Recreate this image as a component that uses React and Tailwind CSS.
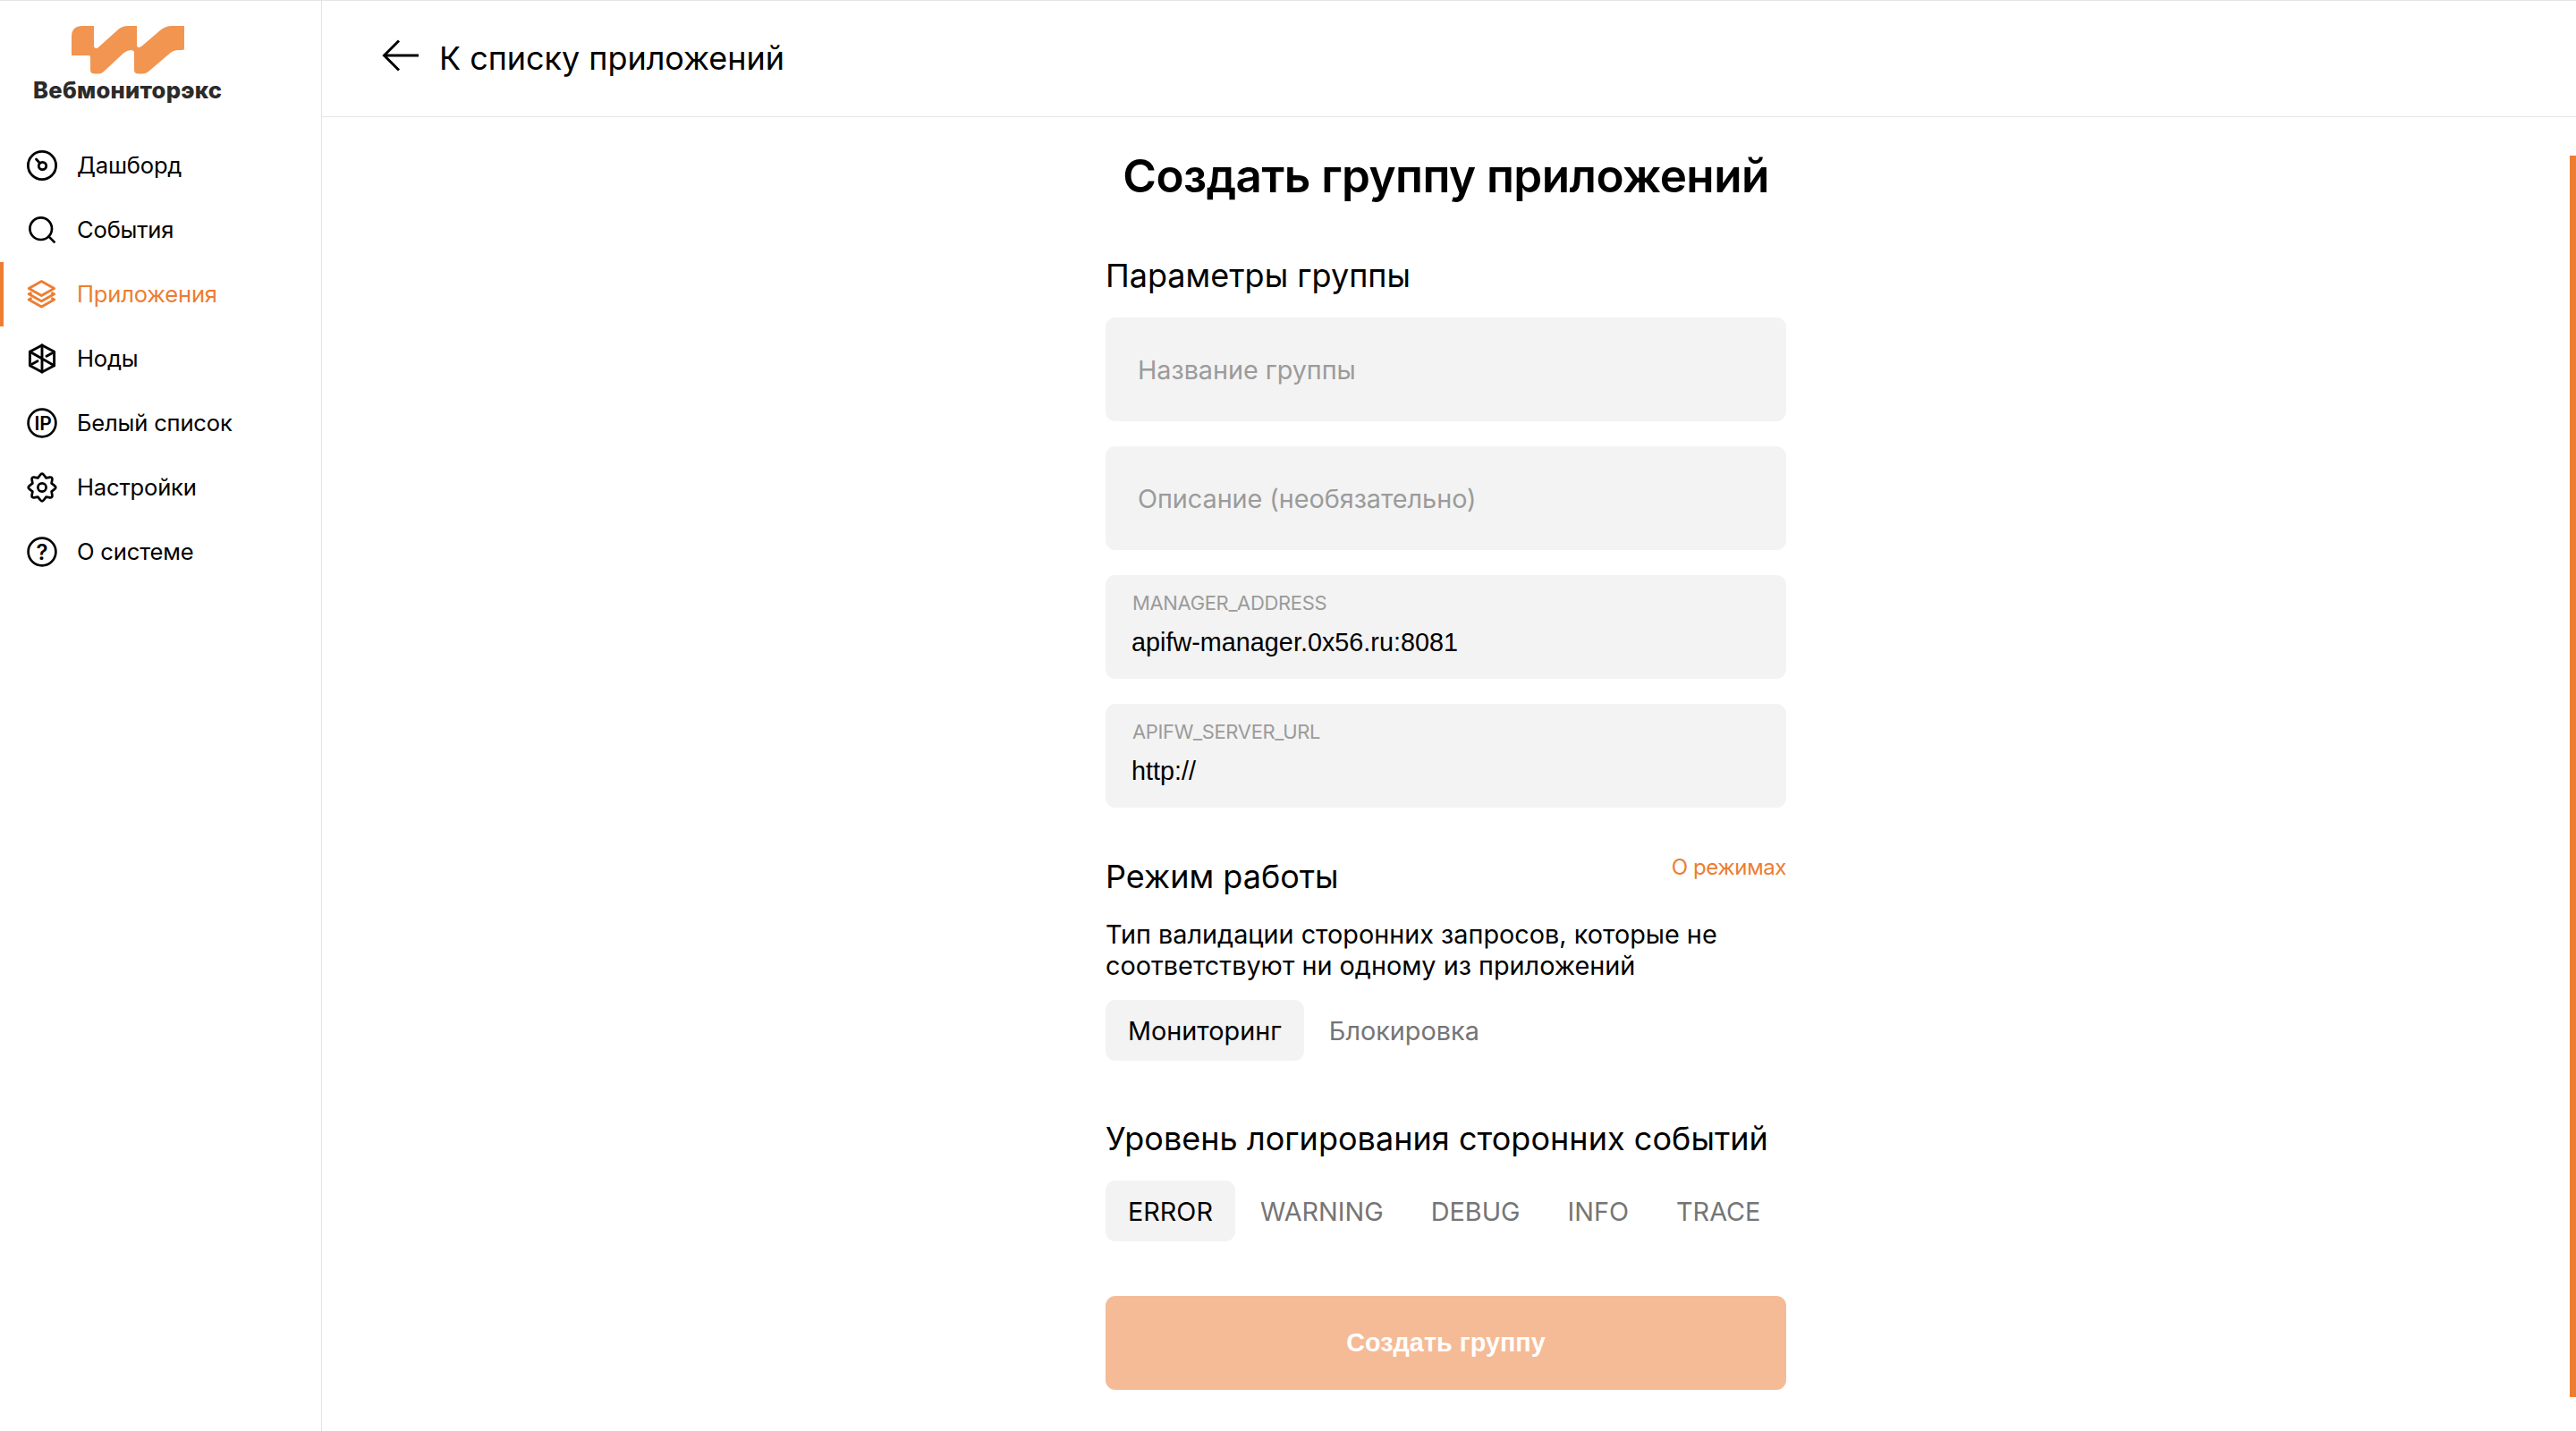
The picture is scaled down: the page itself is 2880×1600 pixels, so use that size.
import React, { useState } from 'react'

const DashboardIcon = () => (
  <svg width="36" height="36" viewBox="0 0 36 36" fill="none" stroke="currentColor" strokeWidth="2.8">
    <circle cx="18" cy="18" r="15.6" />
    <circle cx="18.5" cy="18.5" r="4.2" />
    <path d="M11.5 11l4 4.4" strokeLinecap="round" />
  </svg>
)

const SearchIcon = () => (
  <svg width="36" height="36" viewBox="0 0 36 36" fill="none" stroke="currentColor" strokeWidth="2.7">
    <circle cx="16.7" cy="16.7" r="12.3" />
    <path d="M25.4 25.4l7 7" />
  </svg>
)

const LayersIcon = () => (
  <svg width="36" height="36" viewBox="0 0 36 36" fill="none" stroke="currentColor" strokeWidth="2.9" strokeLinejoin="round">
    <path d="M17.4 3.6l14.2 8-14.2 8-14.2-8z" />
    <path d="M6.5 16.2l-3.3 1.6 14.2 8 14.2-8-3.3-1.6" />
    <path d="M6.5 22.4l-3.3 1.6 14.2 8 14.2-8-3.3-1.6" />
  </svg>
)

const NodesIcon = () => (
  <svg width="36" height="36" viewBox="0 0 36 36" fill="none" stroke="currentColor" strokeWidth="2.9" strokeLinejoin="round" strokeLinecap="round">
    <path d="M18 3l13.6 7.2v15.6L18 33 4.4 25.8V10.2z" />
    <path d="M18 3v30M4.4 10.2l27.2 15.6M23 15.3l6-3.3M13 20.8l-6 3.3" />
  </svg>
)

const IpIcon = () => (
  <svg width="36" height="36" viewBox="0 0 36 36" fill="none">
    <circle cx="18" cy="18" r="15.4" stroke="currentColor" strokeWidth="2.7" />
    <text x="19" y="25.6" textAnchor="middle" fill="currentColor" className="font-['Inter',sans-serif] text-[21px] font-semibold">IP</text>
  </svg>
)

const SettingsIcon = () => (
  <svg width="36" height="36" viewBox="0 0 36 36" fill="none" stroke="currentColor" strokeWidth="2.7" strokeLinejoin="round">
    <path d="M15.8 4.2Q18 1.2 20.2 4.2L22.6 7.4L27 6.6Q29.6 6.4 29.4 9L28.6 13.4L31.8 15.8Q34.8 18 31.8 20.2L28.6 22.6L29.4 27Q29.6 29.6 27 29.4L22.6 28.6L20.2 31.8Q18 34.8 15.8 31.8L13.4 28.6L9 29.4Q6.4 29.6 6.6 27L7.4 22.6L4.2 20.2Q1.2 18 4.2 15.8L7.4 13.4L6.6 9Q6.4 6.4 9 6.6L13.4 7.4Z" />
    <circle cx="18" cy="18" r="4.6" />
  </svg>
)

const HelpIcon = () => (
  <svg width="36" height="36" viewBox="0 0 36 36" fill="none">
    <circle cx="18" cy="18" r="15.4" stroke="currentColor" strokeWidth="2.7" />
    <text x="18" y="26.6" textAnchor="middle" fill="currentColor" className="font-['Inter',sans-serif] text-[24px] font-semibold">?</text>
  </svg>
)

const menu = [
  { label: 'Дашборд', icon: DashboardIcon },
  { label: 'События', icon: SearchIcon },
  { label: 'Приложения', icon: LayersIcon, active: true },
  { label: 'Ноды', icon: NodesIcon },
  { label: 'Белый список', icon: IpIcon },
  { label: 'Настройки', icon: SettingsIcon },
  { label: 'О системе', icon: HelpIcon },
]

const Logo = () => (
  <div className="h-[148px] pt-7 pl-[37px]">
    <svg className="ml-[43px]" width="126" height="54" viewBox="0 0 126 54" fill="#f29551">
      <path d="M0 33V12Q0 0 12 0H25V22Q25 25 28 25Q29 25 31 23L51 5Q56 0 63 0H73V21Q73 24 75 24Q76 24 78 23L99 5Q105 0 112 0H126V25Q126 27 124 27H119Q114 27 110 30.5L86 51Q83 53.5 79 53.5H75Q70 53.5 70 49V30Q70 27 66 27Q62 27 58 30.5L36 51Q33.5 53.5 30 53.5H26Q21 53.5 21 49V35Q21 33 19 33Z" />
    </svg>
    <div className="mt-[3px] text-[25.6px] leading-[30px] font-extrabold tracking-[0.25px] whitespace-nowrap text-[#2b2b2b]">
      Вебмониторэкс
    </div>
  </div>
)

const Sidebar = () => (
  <aside className="w-[360px] shrink-0 border-r border-[#e5e5e5]">
    <Logo />
    <nav>
      {menu.map(({ label, icon: Icon, active }) => (
        <a
          key={label}
          className={`flex h-[72px] items-center gap-[21px] border-l-4 pl-[25px] text-[25.6px] tracking-[-0.2px] ${
            active ? 'border-[#ed7d31] text-[#ed7d31]' : 'border-transparent text-black'
          }`}
        >
          <Icon />
          <span className="pt-px">{label}</span>
        </a>
      ))}
    </nav>
  </aside>
)

const EmptyField = ({ placeholder }) => (
  <input
    placeholder={placeholder}
    className="block h-[116px] w-full rounded-[11px] bg-[#f3f3f3] px-9 text-[28.8px] tracking-[-0.05px] outline-none placeholder:text-[#9b9b9b]"
  />
)

const FilledField = ({ label, value }) => (
  <label className="block h-[116px] rounded-[11px] bg-[#f3f3f3] px-[29px] pt-[18px]">
    <span className="block pl-px text-[22px] leading-[26px] tracking-[-0.35px] text-[#9b9b9b]">{label}</span>
    <input
      defaultValue={value}
      className="mt-[14px] block h-9 w-full bg-transparent font-['Liberation_Sans',sans-serif] text-[28.8px] text-black outline-none"
    />
  </label>
)

const Tabs = ({ options, value, onChange }) => (
  <div className="flex gap-[3px]">
    {options.map((option) => (
      <button
        key={option}
        onClick={() => onChange(option)}
        className={`h-[68px] rounded-[11px] px-[25px] pt-px text-[28.8px] ${
          option === value ? 'bg-[#f3f3f3] text-black' : 'text-[#757575]'
        }`}
      >
        {option}
      </button>
    ))}
  </div>
)

const App = () => {
  const [mode, setMode] = useState('Мониторинг')
  const [level, setLevel] = useState('ERROR')

  return (
    <div className="flex h-[1600px] w-[2880px] overflow-hidden border-t border-[#e5e5e5] bg-white font-['Inter',sans-serif] text-black">
      <Sidebar />
      <div className="flex flex-1 flex-col">
        <header className="flex h-[130px] items-center border-b border-[#e5e5e5] pl-[67px]">
          <svg className="mb-[7px]" width="42" height="36" viewBox="0 0 42 36" fill="none" stroke="currentColor" strokeWidth="3">
            <path d="M41 18H3M19 1.5L2.5 18L19 34.5" />
          </svg>
          <h2 className="mb-px ml-[22px] text-4xl tracking-[-0.05px]">К списку приложений</h2>
        </header>

        <div className="flex flex-1">
          <main className="flex flex-1 justify-center pt-9">
            <div className="w-[761px]">
              <h1 className="text-center text-[51.2px] leading-[58px] font-semibold tracking-[-0.55px] whitespace-nowrap">
                Создать группу приложений
              </h1>

              <h3 className="mt-[61px] text-4xl leading-[44px]">Параметры группы</h3>
              <div className="mt-[25px] flex flex-col gap-7">
                <EmptyField placeholder="Название группы" />
                <EmptyField placeholder="Описание (необязательно)" />
                <FilledField label="MANAGER_ADDRESS" value="apifw-manager.0x56.ru:8081" />
                <FilledField label="APIFW_SERVER_URL" value="http://" />
              </div>

              <div className="mt-[51px] flex items-start justify-between">
                <h3 className="pt-1 text-4xl leading-[44px]">Режим работы</h3>
                <a className="pt-px text-2xl leading-[30px] tracking-[-0.4px] text-[#ed7d31]">О режимах</a>
              </div>
              <p className="mt-[25px] mb-[21px] text-[28.8px] leading-[35px] whitespace-nowrap">
                Тип валидации сторонних запросов, которые не
                <br />
                соответствуют ни одному из приложений
              </p>
              <Tabs options={['Мониторинг', 'Блокировка']} value={mode} onChange={setMode} />

              <h3 className="mt-[65px] mb-[25px] text-4xl leading-[44px] tracking-[0.03px] whitespace-nowrap">
                Уровень логирования сторонних событий
              </h3>
              <Tabs options={['ERROR', 'WARNING', 'DEBUG', 'INFO', 'TRACE']} value={level} onChange={setLevel} />

              <button className="mt-[61px] h-[105px] w-full rounded-[11px] bg-[#f5bb96] font-['Liberation_Sans',sans-serif] text-[28.8px] font-bold text-white">
                Создать группу
              </button>
            </div>
          </main>

          {/* Scrollbar */}
          <div className="mt-[43px] h-[1388px] w-[7px] bg-[#ed7d31]" />
        </div>
      </div>
    </div>
  )
}

export default App
